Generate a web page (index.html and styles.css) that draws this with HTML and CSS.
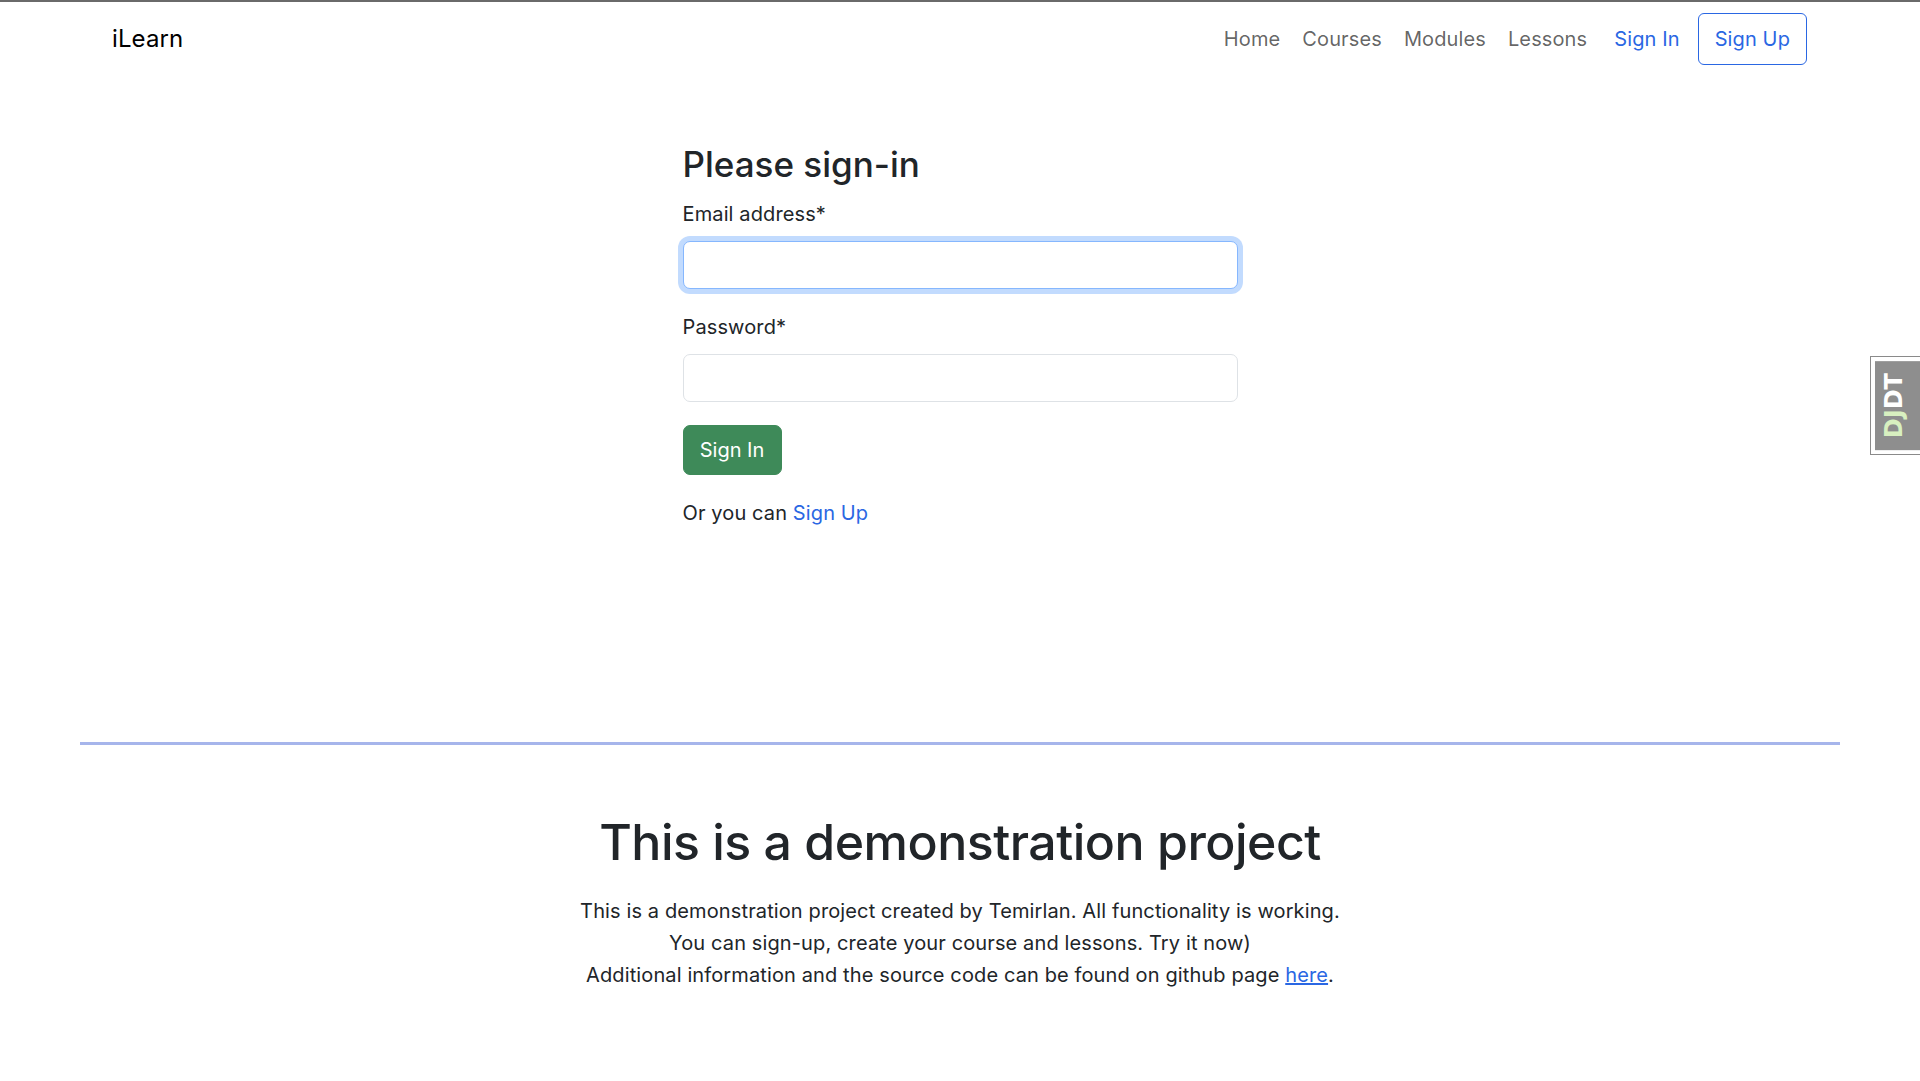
FILE: index.html
```html
<!DOCTYPE html>
<html lang="en">
<head>
<meta charset="utf-8">
<title>iLearn</title>
<link rel="stylesheet" href="styles.css">
</head>
<body>
<div class="topline"></div>
<nav class="navbar">
  <a class="brand" href="#">iLearn</a>
  <ul class="nav-links">
    <li><a href="#">Home</a></li>
    <li><a href="#">Courses</a></li>
    <li><a href="#">Modules</a></li>
    <li><a href="#">Lessons</a></li>
  </ul>
  <div class="auth">
    <a class="auth-link" href="#">Sign In</a>
    <a class="auth-btn" href="#">Sign Up</a>
  </div>
</nav>

<main class="signin">
  <h3 class="title">Please sign-in</h3>
  <form class="form">
    <div class="field">
      <label class="label" for="email">Email address*</label>
      <input class="input input-focus" id="email" type="email">
    </div>
    <div class="field">
      <label class="label" for="password">Password*</label>
      <input class="input" id="password" type="password">
    </div>
    <button type="button" class="btn-success">Sign In</button>
  </form>
  <p class="alt">Or you can <a href="#">Sign Up</a></p>
</main>

<footer class="footer">
  <hr class="divider">
  <h1 class="footer-title">This is a demonstration project</h1>
  <p class="footer-text">This is a demonstration project created by Temirlan. All functionality is working.<br>You can sign-up, create your course and lessons. Try it now)<br>Additional information and the source code can be found on github page <a href="#">here</a>.</p>
</footer>

<div class="djdt"><div class="djdt-btn"><span class="dj">Dj</span>DT</div></div>
</body>
</html>
```

FILE: styles.css
```css
* { box-sizing: border-box; }
html, body { margin: 0; padding: 0; background: #fff; }
body {
  font-family: "Inter", "Noto Sans", "Liberation Sans", sans-serif;
  font-size: 20px;
  line-height: 1.5;
  color: #212529;
  letter-spacing: 0.12px;
}
a { color: #2a67e3; text-decoration: none; }

.topline { height: 2px; background: #6a6a6a; }

.navbar {
  display: flex;
  align-items: center;
  padding: 11px 113px 0 112px;
}
.brand {
  color: #000;
  font-size: 24px;
  line-height: 36px;
  margin-right: auto;
}
.nav-links {
  list-style: none;
  display: flex;
  margin: 0;
  padding: 0;
}
.nav-links a {
  display: block;
  color: rgba(0,0,0,.62);
  padding: 0 11px;
  line-height: 30px;
}
.auth { display: flex; align-items: center; margin-left: 6px; }
.auth-link { padding: 0 18px 0 10px; line-height: 30px; }
.auth-btn {
  border: 1px solid #2a67e3;
  border-radius: 6px;
  padding: 10px 16px;
  line-height: 30px;
}

.signin {
  width: 555px;
  margin: 78px auto 0;
}
.title {
  font-size: 35px;
  font-weight: 500;
  line-height: 42px;
  margin: 0 0 14px;
  letter-spacing: 0;
}
.field { display: flex; flex-direction: column; margin-bottom: 23px; }
.label { line-height: 30px; margin-bottom: 12px; }
.input {
  height: 48px;
  border: 1px solid #dee2e6;
  border-radius: 7px;
  font: inherit;
  padding: 7px 15px;
  background: #fff;
  outline: none;
}
.input-focus {
  border-color: #86b7fe;
  box-shadow: 0 0 0 5px rgba(13,110,253,.25);
}
.btn-success {
  font: inherit;
  color: #fff;
  background: #3e8a59;
  border: 1px solid #3e8a59;
  border-radius: 7px;
  width: 99px;
  height: 50px;
  padding: 0;
  line-height: 30px;
  cursor: pointer;
  display: block;
}
.alt { margin: 23px 0 0; line-height: 30px; }

.footer { padding: 0 80px; }
.divider {
  margin: 214px 0 0;
  border: 0;
  height: 3px;
  background: #a6b5eb;
}
.footer-title {
  text-align: center;
  font-size: 50px;
  font-weight: 500;
  line-height: 60px;
  letter-spacing: -0.5px;
  margin: 67px 0 23px;
}
.footer-text {
  text-align: center;
  line-height: 32px;
  margin: 0;
}
.footer-text a { text-decoration: underline; }

.djdt {
  position: fixed;
  right: 0;
  top: 356px;
  border: 1px solid #8a8a8a;
  border-right: 0;
  background: #fff;
  padding: 4px 0 4px 4px;
}
.djdt-btn {
  writing-mode: vertical-rl;
  transform: rotate(180deg);
  background: #8e8e8e;
  color: #fff;
  font-family: "DejaVu Sans", sans-serif;
  font-weight: bold;
  font-size: 24px;
  line-height: 38px;
  letter-spacing: 0;
  width: 45px;
  padding: 12px 0;
  text-align: center;
  text-transform: uppercase;
}
.dj { color: #d8f0c0; }
```
